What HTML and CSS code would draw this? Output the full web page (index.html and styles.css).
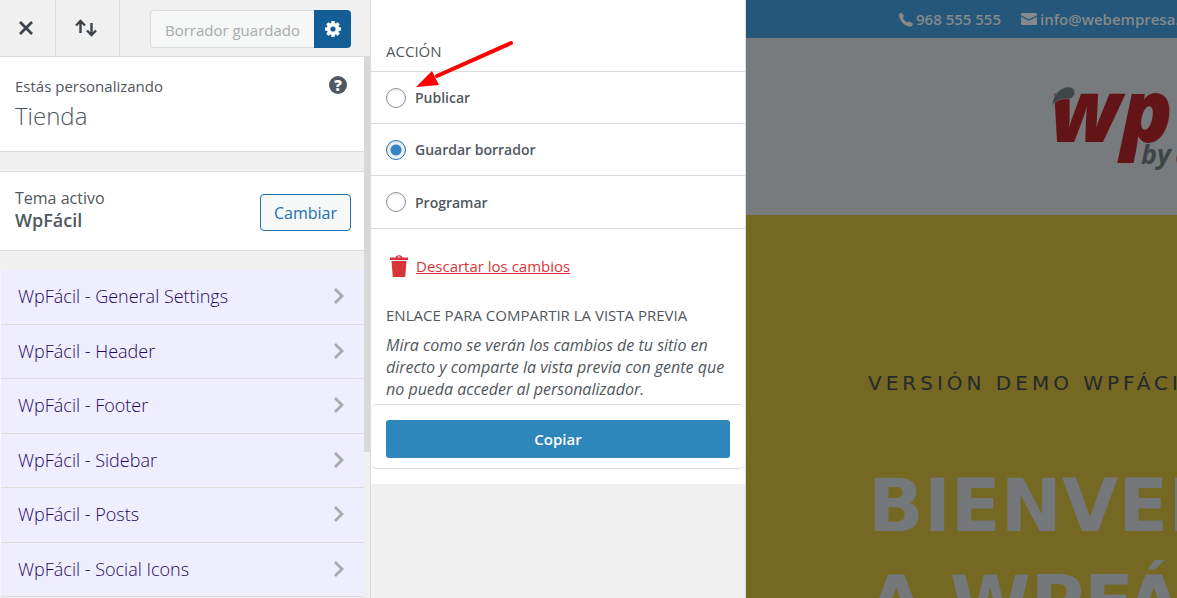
FILE: index.html
```html
<!DOCTYPE html>
<html lang="es">
  <head>
    <meta charset="UTF-8" />
    <meta name="viewport" content="width=device-width, initial-scale=1.0" />
    <title>Personalizar: WpFácil</title>
    <link rel="stylesheet" href="styles.css">
  </head>

  <body>
    <aside class="sidebar">
      <header class="toolbar">
        <button class="tool" type="button" aria-label="Cerrar">
          <svg width="14" height="14" viewBox="0 0 14 14" fill="none" stroke="currentColor" stroke-width="2.8">
            <path d="M1 1L13 13M13 1L1 13" />
          </svg>
        </button>
        <button class="tool tool-sort" type="button" aria-label="Cambiar orden">
          <svg width="22" height="18" viewBox="0 0 22 18" fill="none" stroke="currentColor" stroke-width="2.4">
            <path d="M5.500 14V2.500M1 6.500L5.500 2L10 6.500M16.500 4V15.500M12 11.500L16.500 16L21 11.500" />
          </svg>
        </button>
        <div class="save-group">
          <button class="save" type="button" disabled>Borrador guardado</button>
          <button class="settings" type="button" aria-label="Ajustes de publicación">
            <svg width="16" height="16" viewBox="0 0 16 16">
              <g fill="currentColor">
                <rect x="6.300" y="0" width="3.400" height="16" rx="0.600" />
                <rect x="6.300" y="0" width="3.400" height="16" rx="0.600" transform="rotate(45 8 8)" />
                <rect x="6.300" y="0" width="3.400" height="16" rx="0.600" transform="rotate(90 8 8)" />
                <rect x="6.300" y="0" width="3.400" height="16" rx="0.600" transform="rotate(135 8 8)" />
                <circle cx="8" cy="8" r="6.200" />
              </g>
              <circle cx="8" cy="8" r="2.600" fill="#135e96" />
            </svg>
          </button>
        </div>
      </header>

      <div class="scroll-area">
        <div class="panels">
          <section class="info">
            <div>
              <p class="info-label">Estás personalizando</p>
              <h1 class="info-title">Tienda</h1>
            </div>
            <button class="help" type="button" aria-label="Ayuda">?</button>
          </section>

          <section class="theme">
            <div>
              <p class="theme-label">Tema activo</p>
              <h2 class="theme-name">WpFácil</h2>
            </div>
            <button class="change" type="button">Cambiar</button>
          </section>

          <nav class="sections">
            <a href="#general">WpFácil - General Settings
              <svg class="chevron" viewBox="0 0 10 18"><path d="M1 2L8 9L1 16" /></svg></a>
            <a href="#header">WpFácil - Header
              <svg class="chevron" viewBox="0 0 10 18"><path d="M1 2L8 9L1 16" /></svg></a>
            <a href="#footer">WpFácil - Footer
              <svg class="chevron" viewBox="0 0 10 18"><path d="M1 2L8 9L1 16" /></svg></a>
            <a href="#sidebar">WpFácil - Sidebar
              <svg class="chevron" viewBox="0 0 10 18"><path d="M1 2L8 9L1 16" /></svg></a>
            <a href="#posts">WpFácil - Posts
              <svg class="chevron" viewBox="0 0 10 18"><path d="M1 2L8 9L1 16" /></svg></a>
            <a href="#social">WpFácil - Social Icons
              <svg class="chevron" viewBox="0 0 10 18"><path d="M1 2L8 9L1 16" /></svg></a>
          </nav>
        </div>
        <div class="track"><div class="thumb"></div></div>
      </div>
    </aside>

    <section class="drawer">
      <div class="drawer-body">
        <fieldset class="actions">
          <legend>ACCIÓN</legend>
          <label class="option" for="publish">
            <input type="radio" id="publish" name="status" />Publicar
          </label>
          <label class="option" for="draft">
            <input type="radio" id="draft" name="status" checked />Guardar borrador
          </label>
          <label class="option" for="future">
            <input type="radio" id="future" name="status" />Programar
          </label>
        </fieldset>

        <div class="discard">
          <svg width="20" height="22" viewBox="0 0 20 22" fill="#d63638">
            <path fill-rule="evenodd" d="M1 2.500H6.500C7 -0.500 13 -0.500 13.500 2.500H19V5H1ZM8.200 2.500H11.800C11.500 1.200 8.500 1.200 8.200 2.500Z" />
            <path d="M2.500 6H17.500L16.200 22H3.800Z" />
          </svg>
          <a href="#discard">Descartar los cambios</a>
        </div>

        <div class="share">
          <h2>ENLACE PARA COMPARTIR LA VISTA PREVIA</h2>
          <p>
            Mira como se verán los cambios de tu sitio en directo y comparte la
            vista previa con gente que no pueda acceder al personalizador.
          </p>
        </div>
        <div class="copy-box">
          <button class="copy" type="button">Copiar</button>
        </div>
      </div>

      <svg class="arrow" width="100" height="48" viewBox="0 0 100 48">
        <path d="M98 3L24 36" stroke="#ff0000" stroke-width="4" stroke-linecap="round" />
        <path d="M3 47L19 31L26 45Z" fill="#ff0000" />
      </svg>
    </section>

    <main class="preview">
      <div class="contact">
        <a href="#phone">
          <svg width="14" height="15" viewBox="0 0 14 15" fill="currentColor">
            <path d="M0 2L2.500 0.500L5 4L3.800 5.800C4.300 7.500 6.500 9.700 8.500 10.400L10 9.200L13.800 11.500V13L12 14.600C6 15.500 -0.500 8 0 2Z" />
          </svg>
          968 555 555
        </a>
        <a href="#mail">
          <svg width="16" height="12" viewBox="0 0 16 12">
            <rect width="16" height="12" rx="1" fill="currentColor" />
            <path d="M0 3L8 7L16 3" fill="none" stroke="#245779" stroke-width="1.200" />
          </svg>
          info@webempresa.com
        </a>
      </div>
      <div class="brand">
        <svg class="logo" width="230" height="92" viewBox="0 0 230 92">
          <text class="logo-wp" x="0" y="57">wp</text>
          <path d="M2 21C3 9 11 1 20 2C26 3 27 12 19 14C11 13 6 15 2 21Z" fill="#3f4547" stroke="#787b7d" stroke-width="0.600" />
          <text class="logo-by" x="91" y="79">by</text>
          <circle cx="141" cy="74" r="12" fill="none" stroke="#631416" stroke-width="5" />
        </svg>
      </div>
      <div class="hero">
        <p>VERSIÓN DEMO WPFÁCIL</p>
        <h2>BIENVENIDO<br />A WPFÁCIL</h2>
      </div>
    </main>
  </body>
</html>
```
FILE: styles.css
```css
* {
  margin: 0;
  padding: 0;
  box-sizing: border-box;
}

body {
  display: grid;
  grid-template-columns: 371px 375px 1fr;
  height: 100vh;
  overflow: hidden;
  font-family: "Open Sans", "Noto Sans", sans-serif;
  font-size: 15px;
  color: #50575e;
}

button {
  font: inherit;
  border: 0;
  cursor: pointer;
}

/* sidebar */
.sidebar {
  display: flex;
  flex-direction: column;
  min-height: 0;
  background: #f0f0f0;
  border-right: 1px solid #dcdcde;
}

.toolbar {
  display: flex;
  flex: none;
  height: 57px;
  border-bottom: 1px solid #dcdcde;
}

.tool {
  display: flex;
  align-items: center;
  justify-content: center;
  width: 56px;
  padding-right: 3px;
  border-right: 1px solid #dcdcde;
  background: #f0f0f0;
  color: #3c434a;
}

.tool-sort {
  width: 64px;
}

.save-group {
  display: flex;
  align-items: center;
  margin-left: auto;
  padding: 1px 19px 0 0;
}

.save {
  height: 38px;
  padding: 2px 14px 0;
  border: 1px solid #dcdcde;
  border-right: 0;
  border-radius: 4px 0 0 4px;
  background: #f6f7f7;
  color: #a7aaad;
}

.settings {
  display: flex;
  align-items: center;
  justify-content: center;
  width: 37px;
  height: 38px;
  border-radius: 0 4px 4px 0;
  background: #135e96;
  color: #fff;
}

.scroll-area {
  display: flex;
  flex: 1;
  min-height: 0;
}

.panels {
  flex: 1;
}

.track {
  width: 6px;
}

.thumb {
  height: 73%;
  background: #d8d8d8;
}

.info,
.theme {
  display: flex;
  justify-content: space-between;
  border-bottom: 1px solid #dcdcde;
  background: #fff;
}

.info {
  padding: 17px 17px 17px 15px;
}

.info-label {
  line-height: 24px;
}

.info-title {
  font-size: 24px;
  font-weight: 300;
  line-height: 36px;
}

.help {
  width: 18px;
  height: 18px;
  margin-top: 2px;
  border-radius: 50%;
  background: #50575e;
  color: #fff;
  font-weight: 800;
  line-height: 18px;
}

.theme {
  align-items: flex-end;
  margin-top: 19px;
  padding: 15px 13px 19px 15px;
  border-top: 1px solid #dcdcde;
}

.theme-label {
  font-size: 16px;
  line-height: 22px;
}

.theme-name {
  font-size: 18px;
  font-weight: 600;
  line-height: 22px;
}

.change {
  height: 37px;
  padding: 0 13px;
  border: 1px solid #2271b1;
  border-radius: 4px;
  background: #f6f7f7;
  color: #2271b1;
  font-size: 16px;
}

.sections {
  margin-top: 19px;
  border-left: 1px solid #f6f6fb;
}

.sections a {
  display: flex;
  align-items: center;
  justify-content: space-between;
  height: 55px;
  padding: 0 20px 2px 17px;
  border-bottom: 1px solid #dcdcde;
  background: #eeeeff;
  color: #260660;
  font-size: 18px;
  font-weight: 300;
  text-decoration: none;
}

.sections a:nth-child(even) {
  height: 54px;
}

.chevron {
  width: 10px;
  height: 18px;
  fill: none;
  stroke: #a7aaad;
  stroke-width: 2.800;
}

/* publish settings */
.drawer {
  position: relative;
  background: #f0f0f0;
  border-right: 1px solid #dcdcde;
}

.drawer-body {
  padding: 40px 0 15px;
  background: #fff;
}

.actions {
  border: 0;
}

.actions legend {
  padding: 0 15px;
  font-weight: 500;
  line-height: 22px;
  margin-bottom: 9px;
}

.option {
  display: flex;
  align-items: center;
  gap: 9px;
  height: 52px;
  padding: 0 15px;
  border-top: 1px solid #dcdcde;
  font-weight: 600;
  font-size: 14px;
}

.option:last-child {
  height: 54px;
  border-bottom: 1px solid #dcdcde;
}

.option input {
  appearance: none;
  width: 20px;
  height: 20px;
  border: 1px solid #8c8f94;
  border-radius: 50%;
  background: #fff;
  box-shadow: inset 0 1px 2px rgba(0, 0, 0, 0.1);
}

.option input:checked {
  border-color: #2271b1;
  background: radial-gradient(circle, #3582c4 5px, #f0f0f1 6px);
}

.discard {
  display: flex;
  align-items: center;
  gap: 7px;
  padding: 25px 18px 25px;
  line-height: 24px;
}

.discard a {
  color: #d63638;
}

.share {
  padding: 0 15px;
}

.share h2 {
  font-size: 15px;
  font-weight: 500;
  line-height: 24px;
  margin-bottom: 7px;
}

.share p {
  font-size: 16px;
  font-style: italic;
  line-height: 22px;
  margin-bottom: 4px;
}

.copy-box {
  padding: 15px 15px 10px;
  border: 1px solid #dcdcde;
  border-width: 1px 0;
  border-radius: 6px;
}

.copy {
  width: 100%;
  height: 38px;
  border-radius: 3px;
  background: #2f86bb;
  color: #fff;
  font-weight: 600;
}

.arrow {
  position: absolute;
  top: 40px;
  left: 42px;
}

/* site preview */
.preview {
  display: flex;
  flex-direction: column;
  min-width: 0;
  overflow: hidden;
  white-space: nowrap;
  background: #746823;
}

.contact {
  display: flex;
  align-items: center;
  gap: 20px;
  flex: none;
  height: 38px;
  padding-left: 153px;
  background: #245779;
}

.contact a {
  display: flex;
  align-items: center;
  gap: 3px;
  color: #85898b;
  font-weight: 600;
  text-decoration: none;
}

.brand {
  flex: none;
  height: 177px;
  padding: 47px 0 0 304px;
  background: #787b7d;
}

.logo-wp {
  font-size: 86px;
  font-style: italic;
  font-weight: 800;
  fill: #631416;
}

.logo-by {
  font-size: 27px;
  font-style: italic;
  font-weight: 700;
  fill: #3f4547;
}

.hero {
  padding: 152px 0 0 122px;
  font-family: "DejaVu Sans", sans-serif;
}

.hero p {
  color: #25292c;
  font-size: 20px;
  line-height: 32px;
  letter-spacing: 4px;
}

.hero h2 {
  margin-top: 58px;
  color: #75787a;
  font-size: 73px;
  font-weight: 700;
  line-height: 97px;
}
```
